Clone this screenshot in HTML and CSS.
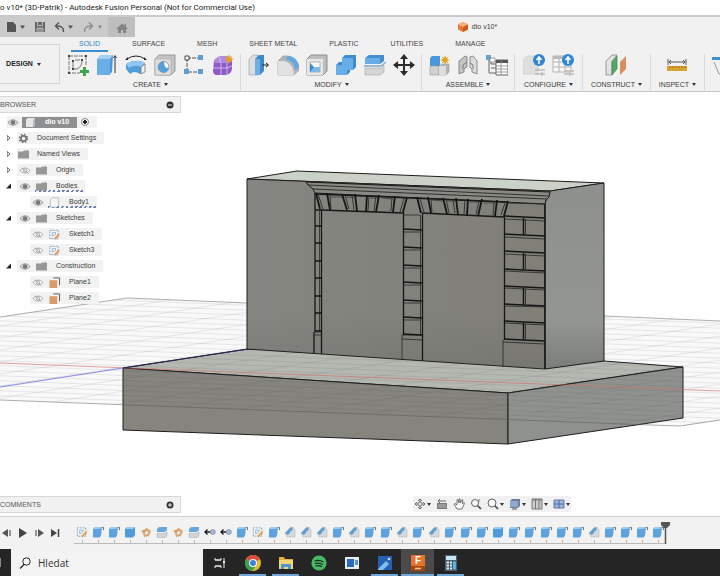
FILE: index.html
```html
<!DOCTYPE html>
<html lang="en">
<head>
    <meta charset="UTF-8">
    <meta name="viewport" content="width=device-width, initial-scale=1.0">
    <title>dio v10* (3D-Patrik) - Autodesk Fusion Personal</title>
    <link rel="stylesheet" href="styles.css">
</head>
<body>
    <!-- shared icons -->
    <svg class="sprite" aria-hidden="true">
        <symbol id="eye" viewBox="0 0 14 10">
            <path d="M1 5Q7-1.500 13 5Q7 11.500 1 5Z" fill="#ddd" stroke="#8a8a8a"/>
            <circle cx="7" cy="5" r="2.600" fill="#777"/>
        </symbol>
        <symbol id="eye-off" viewBox="0 0 14 10">
            <path d="M1 5Q7-1 13 5Q7 11 1 5ZM3 2l8 6.500" fill="#fff" stroke="#999" stroke-width=".9"/>
            <circle cx="7" cy="5" r="2" fill="none" stroke="#999"/>
        </symbol>
        <symbol id="folder" viewBox="0 0 13 10">
            <path d="M1 2h5l1-1h5v8H1Z" fill="#989898"/>
        </symbol>
        <symbol id="gear" viewBox="0 0 13 10">
            <circle cx="6.500" cy="5" r="2.700" fill="none" stroke="#777" stroke-width="1.800"/>
            <circle cx="6.500" cy="5" r="4" fill="none" stroke="#777" stroke-width="1.600" stroke-dasharray="1.570 1.570"/>
        </symbol>
        <symbol id="body" viewBox="0 0 13 12">
            <path d="M2 3l2-2h7v8l-2 2H2Z" fill="#f6f6f6" stroke="#aab0b8" stroke-width=".8"/>
        </symbol>
        <symbol id="sketch" viewBox="0 0 13 12">
            <path d="M1.500 1.500h9v9h-9Z" fill="#f5f8fb" stroke="#7f9fba" stroke-dasharray="2 1"/>
            <path d="M4 8V4h4Q8 7 4 8" fill="none" stroke="#7f9fba" stroke-width=".8"/>
            <path d="M6.500 11l5-5.500" stroke="#e2a04a" stroke-width="2"/>
        </symbol>
        <symbol id="plane" viewBox="0 0 13 12">
            <path d="M5 1h7v8" fill="none" stroke="#555"/>
            <path d="M1 3.500h8.500V12H1Z" fill="#d99a6c"/>
        </symbol>
        <symbol id="t-extrude" viewBox="0 0 12 12">
            <path d="M1 3l2-2h7l-1 9-1.500 1.500H1Z" fill="#5da2dc"/>
            <path d="M1 3l2-2h7L8 3Z" fill="#9ccbf0"/>
            <path d="M10 1.500h1.500V4" fill="none" stroke="#555" stroke-width=".8"/>
        </symbol>
        <symbol id="t-box" viewBox="0 0 12 12">
            <path d="M1 3l2-2h8v8l-2 2.500H1Z" fill="#4f9bdb"/>
            <path d="M1 3l2-2h8L9 3Z" fill="#9ccbf0"/>
        </symbol>
        <symbol id="t-plane" viewBox="0 0 12 12">
            <path d="M1 5l6-3 4 3-2 5-5 1-1-4Z" fill="#d7a877"/>
            <path d="M5 6l3-1v3l-3 .5Z" fill="#f6e7d7"/>
        </symbol>
        <symbol id="t-split" viewBox="0 0 12 12">
            <path d="M1 3l2-2h8v3L9 6H1Z" fill="#64a8df"/>
            <path d="M1 7.500h8L11 6v4l-2 1.500H1Z" fill="#d2d5d8" stroke="#a4a8ac" stroke-width=".5"/>
        </symbol>
        <symbol id="t-move" viewBox="0 0 12 12">
            <path d="M1 6h6M3.500 3.500L1 6l2.500 2.500" fill="none" stroke="#222" stroke-width="1.400"/>
            <circle cx="8.800" cy="6" r="2.500" fill="#a9b8d0" stroke="#7888a4" stroke-width=".7"/>
        </symbol>
        <symbol id="t-chamfer" viewBox="0 0 12 12">
            <path d="M1 7l6-6h2l2 3v7H3Z" fill="#d6d8da" stroke="#b0b2b4" stroke-width=".5"/>
            <path d="M1 7l6-6 2 2-5 6Z" fill="#5f9fd0"/>
        </symbol>
        <symbol id="star" viewBox="0 0 10 10">
            <path d="M5 0l1 3 2.500-1.500L7 4l3 1-3 1 1.500 2.500L6 7l-1 3-1-3-2.500 1.500L3 6 0 5l3-1-1.500-2.500L4 3Z" fill="#e5a022"/>
        </symbol>
        <symbol id="upload" viewBox="0 0 12 12">
            <circle cx="6" cy="6" r="6" fill="#2f86d2"/>
            <path d="M6 10V4M3.500 6L6 3l2.500 3" fill="none" stroke="#fff" stroke-width="1.500"/>
        </symbol>
    </svg>

    <div class="titlebar">o v10* (3D-Patrik) - Autodesk Fusion Personal (Not for Commercial Use)</div>

    <header class="quickbar">
        <div class="quick-tools">
            <button aria-label="File"><svg width="20" height="12" viewBox="0 0 20 12"><path d="M1 1h6l3 3v7H1Z" fill="#555"/><path d="M14 4.500h5L16.500 8Z" fill="#555"/></svg></button>
            <button aria-label="Save"><svg width="10" height="12" viewBox="0 0 10 12"><path d="M0 1h10v10H0Z" fill="#666"/><path d="M2.500 1v3.500h5V1M2 11V7h6v4M4 7v4M6 7v4" fill="none" stroke="#ccc" stroke-width=".9"/></svg></button>
            <button aria-label="Undo"><svg width="20" height="12" viewBox="0 0 20 12"><path d="M9.500 11Q10 4.500 2 5M5 1.500L1.500 5 5 8.500" fill="none" stroke="#555" stroke-width="1.400"/><path d="M14 4.500h5L16.500 8Z" fill="#555"/></svg></button>
            <button aria-label="Redo"><svg width="20" height="12" viewBox="0 0 20 12"><path d="M1.500 11Q1 4.500 9 5M6 1.500L9.500 5 6 8.500" fill="none" stroke="#8d8d8d" stroke-width="1.400"/><path d="M15 4.500h4L17 8Z" fill="#888"/></svg></button>
        </div>
        <button class="home-tab" aria-label="Home"><svg width="12" height="12" viewBox="0 0 12 12"><path d="M6 1.500L0 7h2v4h3V8h2v3h3V7h2l-2-2V2H8.500v1.500Z" fill="#858585"/></svg></button>
        <div class="doc-tab">
            <svg width="10" height="10" viewBox="0 0 10 10"><path d="M0 2.500L5 0l5 2.500v5L5 10 0 7.500Z" fill="#e4793a"/><path d="M0 2.500L5 0l5 2.500L5 5Z" fill="#f6b07c"/><path d="M5 5l5-2.500v5L5 10Z" fill="#cc5c22"/></svg>
            <span>dio v10*</span>
        </div>
    </header>

    <div class="ribbon">
        <button class="workspace">DESIGN <i class="caret"></i></button>
        <div class="ribbon-main">
            <nav class="tabs">
                <a href="#" class="active">SOLID</a>
                <a href="#">SURFACE</a>
                <a href="#">MESH</a>
                <a href="#">SHEET METAL</a>
                <a href="#">PLASTIC</a>
                <a href="#">UTILITIES</a>
                <a href="#">MANAGE</a>
            </nav>
            <div class="groups">
                <div class="group">
                    <div class="tools">
                        <button aria-label="Create Sketch"><svg viewBox="0 0 22 22"><path d="M2 2h17M2 2v17h11M19 2v10" fill="none" stroke="#777" stroke-dasharray="4 1"/><path d="M6 15V7M6 15h4Q15 13 15 6" fill="none" stroke="#777"/><path d="M8 6h5" stroke="#777"/><path d="M1 1h2v2H1ZM18 1h2v2h-2ZM1 18h2v2H1ZM5 6h2v2H5ZM14 5h2v2h-2ZM5 14h2v2H5Z" fill="#444"/><path d="M17.500 13v9M13 17.500h9" stroke="#3da54c" stroke-width="3"/></svg></button>
                        <button aria-label="Extrude"><svg viewBox="0 0 22 22"><path d="M1 5l4-4h12l-1 17-3 3H1Z" fill="#4c97d6"/><path d="M1 5l4-4h12l-3 4Z" fill="#a2cff3"/><path d="M1 5h13v16H1Z" fill="#69aee7"/><path d="M19 19V3M17.500 4L19 1.500 20.500 4" fill="none" stroke="#333"/></svg></button>
                        <button aria-label="Revolve"><svg viewBox="0 0 22 22"><path d="M1 10Q11 4 20 9l-1 9-4 2Q9 16 5 20l-4-5Z" fill="#4f9ddb"/><path d="M1 10Q11 4 20 9l-4 4Q9 10 4 14Z" fill="#91c6f0"/><path d="M16 13l4-3v8l-4 2Z" fill="#f0f0f0" stroke="#777" stroke-width=".8"/><path d="M2 5Q11-1 20 5" fill="none" stroke="#222"/><path d="M0 6l3-3v3ZM22 6l-3-3v3Z" fill="#222"/></svg></button>
                        <button aria-label="Hole"><svg viewBox="0 0 22 22"><path d="M1 5l4-4h16v16l-4 4H1Z" fill="#c4c4c4" stroke="#999"/><path d="M1 5h16v16H1Z" fill="#dedede" stroke="#aaa" stroke-width=".6"/><circle cx="9.500" cy="13" r="5.500" fill="#fafafa" stroke="#999"/><path d="M10 7.500a5.500 5.500 0 1 0 5 6.500Q10 15 10 7.500" fill="#579fd6"/></svg></button>
                        <button aria-label="Pattern"><svg viewBox="0 0 22 22"><path d="M4 4h14M4 4v14h14" fill="none" stroke="#555" stroke-dasharray="4 1"/><path d="M2 2h4v4H2Z" fill="#fff" stroke="#444"/><path d="M15 1h5v5h-5ZM1 15h5v5H1ZM15 15h5v5h-5Z" fill="#599fd5"/></svg></button>
                        <button aria-label="Create Form"><svg viewBox="0 0 22 22"><path d="M2 7q3-5 9-5 8 0 9 5v8q-1 6-8 6H4q-3-1-3-4Z" fill="#8e5bc5"/><path d="M2 7q3-5 9-5 8 0 9 5l-4 2H3Z" fill="#b48ae0"/><path d="M9 9v12M1 14h14l5-2M15 9v12M8 3q-1 3 1 6" fill="none" stroke="#dcc8f2" stroke-width=".8"/><use href="#star" x="12" y="0" width="10" height="10"/></svg></button>
                    </div>
                    <span class="group-name">CREATE <i class="caret"></i></span>
                </div>
                <div class="group">
                    <div class="tools">
                        <button aria-label="Press Pull"><svg viewBox="0 0 22 22"><path d="M1 5l4-4h5v20H1Z" fill="#ddd" stroke="#999" stroke-width=".6"/><path d="M7 5l4-4h5v16l-4 4H7Z" fill="#4088c8"/><path d="M7 5h5v16H7Z" fill="#6aafe8"/><path d="M14 11h6M18 9l2.500 2-2.500 2" fill="none" stroke="#222"/></svg></button>
                        <button aria-label="Fillet"><svg viewBox="0 0 22 22"><path d="M1 7l5-5h5q10 1 11 14l-5 5H1Z" fill="#b5b5b5" stroke="#999" stroke-width=".7"/><path d="M1 21V7h5q10 1 11 14Z" fill="#e1e1e1"/><path d="M8 5l3-3q10 1 11 11l-4 3Q17 7 8 5Z" fill="#64a8df"/></svg></button>
                        <button aria-label="Shell"><svg viewBox="0 0 22 22"><path d="M1 5l4-4h16v16l-4 4H1Z" fill="#bdbdbd" stroke="#8d8d8d"/><path d="M1 5h16v16H1Z" fill="#e8e8e8"/><path d="M4 8h10v10H4Z" fill="#fafafa" stroke="#999" stroke-width=".7"/><path d="M4 9l4 4v5H4Z" fill="#3f89ca"/><path d="M8 13h6v5H4Z" fill="#7db9e8"/></svg></button>
                        <button aria-label="Combine"><svg viewBox="0 0 22 22"><path d="M7 4l3-3h11v12l-3 3h-3v2l-3 3H1V11l3-3h3Z" fill="#3e8bd0"/><path d="M7 4h11v12h-6v5H1V11h6Z" fill="#68aee8"/></svg></button>
                        <button aria-label="Split Body"><svg viewBox="0 0 22 22"><path d="M1 4l4-3h15v6l-4 3H1Z" fill="#448fd0"/><path d="M1 4h15v6H1Z" fill="#66ace6"/><path d="M0 12h17l5-4" fill="none" stroke="#3d83bd"/><path d="M1 14h16l3-3v7l-4 3H1Z" fill="#d5d5d5" stroke="#aaa" stroke-width=".6"/></svg></button>
                        <button aria-label="Move"><svg viewBox="0 0 22 22"><path d="M11 3v16M3 11h16" stroke="#2b2b2b" stroke-width="2"/><path d="M11 0l4 5H7ZM11 22l4-5H7ZM0 11l5-4v8ZM22 11l-5-4v8Z" fill="#2b2b2b"/></svg></button>
                    </div>
                    <span class="group-name">MODIFY <i class="caret"></i></span>
                </div>
                <div class="group compact">
                    <div class="tools">
                        <button aria-label="New Component"><svg viewBox="0 0 22 22"><path d="M2 4l2-2h8v10H2Z" fill="#4896db"/><path d="M2 12h9v9H2Z" fill="#d2d2d2" stroke="#999" stroke-width=".6"/><path d="M11 12l3-2h7v8l-3 3h-7Z" fill="#b4b4b4" stroke="#999" stroke-width=".6"/><path d="M11 12h7v9h-7Z" fill="#ddd"/><use href="#star" x="12" y="1" width="10" height="10"/></svg></button>
                        <button aria-label="Joint"><svg viewBox="0 0 22 22"><path d="M2 7l6-5 2 1v10l-3 2v3l-5 2Z" fill="#c4c4c4" stroke="#777" stroke-width=".8"/><path d="M20 7l-4-5-3 1v10l2 2v3l5 2Z" fill="#ddd" stroke="#777" stroke-width=".8"/><path d="M10 8l-4 3v4M13 9l3 2v4" fill="none" stroke="#777"/></svg></button>
                        <button aria-label="Bill of Materials"><svg viewBox="0 0 22 22"><path d="M3 4v15h7M5 7v3h5M5 14h5" fill="none" stroke="#666"/><path d="M0 1h5v5H0Z" fill="#62a4da"/><path d="M4 4h5v4H4Z" fill="#fff" stroke="#777" stroke-width=".7"/><path d="M10 6h12v15H10Z" fill="#fff" stroke="#666"/><path d="M10 6h12v3H10Z" fill="#555"/><path d="M10 12h12M10 15h12M10 18h12M15 7v14" stroke="#888" stroke-width=".8"/></svg></button>
                    </div>
                    <span class="group-name">ASSEMBLE <i class="caret"></i></span>
                </div>
                <div class="group wide">
                    <div class="tools">
                        <button aria-label="Configure Design"><svg viewBox="0 0 22 22"><path d="M0 6l4-4h11v18H0Z" fill="#dfdfdf" stroke="#ccc" stroke-width=".7"/><path d="M12 16h10M12 20h10M15 14v3M19 18v4" stroke="#bbb" stroke-width="1.400"/><use href="#upload" x="10" y="0" width="12" height="12"/></svg></button>
                        <button aria-label="Configuration Table"><svg viewBox="0 0 22 22"><path d="M1 2h18v16H1ZM1 8h18M1 13h18M7 2v16M13 2v16" fill="#f7f7f7" stroke="#b2b2b2"/><path d="M1 2h18v3H1Z" fill="#bbb"/><path d="M12 17h10M12 20h10M18 18v4" stroke="#bbb" stroke-width="1.400"/><use href="#upload" x="10" y="0" width="12" height="12"/></svg></button>
                    </div>
                    <span class="group-name">CONFIGURE <i class="caret"></i></span>
                </div>
                <div class="group wide">
                    <div class="tools">
                        <button aria-label="Offset Plane"><svg viewBox="0 0 22 22"><path d="M1 7l6-6h5l-5 6v14H1Z" fill="#e2e2e2" stroke="#888" stroke-width=".8"/><path d="M7 8l5-6v13l-5 6Z" fill="#4faa63" stroke="#377b46" stroke-width=".6"/><path d="M15 8l6-6v13l-6 6Z" fill="#d98e5d"/></svg></button>
                    </div>
                    <span class="group-name">CONSTRUCT <i class="caret"></i></span>
                </div>
                <div class="group wide">
                    <div class="tools">
                        <button aria-label="Measure"><svg viewBox="0 0 22 22"><path d="M2 5v6M20 5v6M3 8h16M5 6L3 8l2 2M17 6l2 2-2 2" fill="none" stroke="#555"/><path d="M1 12h20v5H1Z" fill="#d9a12f"/><path d="M4 12v2M7 12v2M10 12v2M13 12v2M16 12v2M19 12v2" stroke="#8f6510" stroke-width=".8"/></svg></button>
                    </div>
                    <span class="group-name">INSPECT <i class="caret"></i></span>
                </div>
                <div class="group">
                    <div class="tools">
                        <button aria-label="Insert"><svg viewBox="0 0 22 22"><path d="M0 3h12v3H0Z" fill="#408fd3"/><path d="M2 8l5 12h5" fill="none" stroke="#999"/></svg></button>
                    </div>
                </div>
            </div>
        </div>
    </div>

    <main class="viewport">
        <svg class="scene" viewBox="0 92 720 424" preserveAspectRatio="xMidYMid slice">
            <defs>
                <clipPath id="ground"><path d="M-20 320L127 298 740 322V417L680 426-20 399Z"/></clipPath>
                <linearGradient id="front" x1="0" y1="0" x2="1" y2="0"><stop offset="0" stop-color="#858681"/><stop offset="1" stop-color="#807f78"/></linearGradient>
                <linearGradient id="side" x1="0" y1="0" x2="0" y2="1"><stop offset="0" stop-color="#8d908c"/><stop offset=".75" stop-color="#929591"/><stop offset="1" stop-color="#7b7d79"/></linearGradient>
                <linearGradient id="shade" x1="0" y1="0" x2="0" y2="1"><stop offset=".7" stop-color="#555" stop-opacity="0"/><stop offset="1" stop-color="#555" stop-opacity=".2"/></linearGradient>
            </defs>
            <path d="M-20 320L127 298 740 322V417L680 426-20 399Z" fill="#f9f9f9"/>

            <!-- plinth -->
            <g stroke="#1d1d1d" stroke-linejoin="round">
                <path d="M123 368L248 349 604 361 683 367 508 393Z" fill="#b4b8b1"/>
                <path d="M123 368L508 393V444L123 430Z" fill="#85847e"/>
                <path d="M508 393L683 367V418L508 444Z" fill="#8e918d"/>
            </g>

            <g clip-path="url(#ground)">
                <path id="gridAcross" class="grid-line"/>
                <path id="gridDepth" class="grid-line"/>
            </g>
            <path d="M0 317L127 298 247 303M604 316L720 321M0 400L650 425 680 426 720 420" fill="none" stroke="#555" stroke-opacity=".6" stroke-width=".8"/>
            <path d="M0 363L720 391" stroke="#d46a6a" stroke-opacity=".8" stroke-width=".8"/>
            <path d="M0 387L123 368" stroke="#7a7ae0" stroke-width=".9"/>
            <path d="M123 368L248 349" stroke="#26265a" stroke-width="1.200"/>

            <!-- wall block -->
            <g stroke="#1d1d1d" stroke-linejoin="round">
                <path d="M247 179L297 171 604 183 550 191Z" fill="#cbd0c8"/>
                <path d="M247 179L550 191 545 203V369L247 349Z" fill="url(#front)"/>
                <path d="M550 191L604 183V361L545 369V203Z" fill="url(#side)"/>
            </g>
            <path d="M247 179L545 191V369L247 349Z" fill="url(#shade)"/>
            <path d="M306 182L550 192 549 197 546 200 545 204 315 193 313 189 308 185Z" fill="#8a8a84" stroke="#1d1d1d"/>
            <path d="M308 185L549 196M313 189L547 199" stroke="#252525" stroke-width=".9"/>

            <!-- arches -->
            <path d="M316 194L507 202M321 210L403 213M422 213L504 217" stroke="#181818" stroke-width="1.400"/>
            <path d="M316 193l4 16M327 193l3 17M342 194l5 16M355 194l2 17M367 195l-1 17M379 195l-3 17M395 196l-2 16M407 197l-4 15M417 197l4 16M428 197l3 16M443 198l4 16M456 198l2 17M468 199l-1 16M482 199l-4 17M497 200l-2 16M508 201l-4 15" stroke="#151515" stroke-width="1.800"/>
            <path d="M318 194l5 15M330 195l1 14M345 195l4 14M352 195l2 15M369 196l-1 15M376 196l-2 15M392 197l-1 14M404 198l-4 14M420 199l4 13M431 199l1 13M446 199l3 14M453 200l2 13M465 200l-1 14M479 201l-3 13M494 202l-1 13M505 203l-4 12" stroke="#222" stroke-width=".8"/>
            <path d="M331 197l11 0M346 197l9 1M370 198l8 0M382 198l11 1M432 200l11 1M447 201l8 0M470 202l10 0M484 203l11 0" stroke="#333" stroke-width=".7"/>

            <!-- left pilaster -->
            <path d="M315 193V332M321.500 210V354M314 332V353" stroke="#161616" stroke-width="1.300"/>
            <path d="M319.500 211V331M314 332h8M314 335h8" stroke="#262626" stroke-width=".8"/>
            <path d="M315 210h6M315 226h7M315 243h7M315 261h7M315 278h7M315 296h7M315 313h7M315 331h7" stroke="#151515" stroke-width="1.700"/>

            <!-- middle pilaster -->
            <path d="M403.500 212V335M422.500 213V361" stroke="#161616" stroke-width="1.300"/>
            <path d="M420.500 215V334M402 335V360M402 335h20M402 339l20 1M404 215h16M404 232h16M404 250h16M404 268h16M404 285h16M404 303h16M404 320h16" stroke="#262626" stroke-width=".8"/>
            <path d="M403 229l19 1M403 247l19 1M403 265l19 1M403 282l19 1M403 300l19 1M403 317l19 1M403 334l19 1" stroke="#151515" stroke-width="1.700"/>

            <!-- right pilaster -->
            <path d="M504.500 217V340M545 204V369" stroke="#161616" stroke-width="1.300"/>
            <path d="M503 340V367M503 342l42 2M505 219l40 2M505 237l40 2M505 254l40 2M505 271l40 2M505 288l40 2M505 306l40 1M505 323l40 2M507 203l38 1" stroke="#262626" stroke-width=".8"/>
            <path d="M504 216l41 2M504 234l41 2M504 251l41 2M504 269l41 2M504 286l41 2M504 304l41 2M504 321l41 2M504 339l41 2M523.500 218v17M523.500 253v17M523.500 288v17M523.500 323v17" stroke="#151515" stroke-width="1.500"/>
            <path d="M525.500 219v16M525.500 254v16M525.500 289v16M525.500 324v16" stroke="#262626" stroke-width=".8"/>
        </svg>

        <aside class="browser">
            <div class="panel-head">
                <span>BROWSER</span>
                <button aria-label="Collapse"><svg width="8" height="8" viewBox="0 0 8 8"><circle cx="4" cy="4" r="3.500" fill="#333"/><path d="M2 4h4" stroke="#eee"/></svg></button>
            </div>
            <ul class="tree">
                <li class="root">
                    <div class="chip">
                        <svg class="eye"><use href="#eye"/></svg>
                        <span class="root-name"><svg width="9" height="9" viewBox="0 0 9 9"><path d="M0 1.500L2 0h7v7L7 9H0Z" fill="#e5e7ea"/><path d="M7 2l2-2v7L7 9Z" fill="#b8bcc2"/></svg>dio v10</span>
                        <input type="radio" name="component" aria-label="Activate component" checked>
                    </div>
                </li>
                <li><button class="arrow" aria-label="Expand"></button><div class="chip plain"><svg class="icon"><use href="#gear"/></svg>Document Settings</div></li>
                <li><button class="arrow" aria-label="Expand"></button><div class="chip plain"><svg class="icon"><use href="#folder"/></svg>Named Views</div></li>
                <li><button class="arrow" aria-label="Expand"></button><div class="chip"><svg class="eye"><use href="#eye-off"/></svg><svg class="icon"><use href="#folder"/></svg>Origin</div></li>
                <li><button class="arrow open" aria-label="Collapse"></button><div class="chip marked"><svg class="eye"><use href="#eye"/></svg><svg class="icon"><use href="#folder"/></svg>Bodies</div></li>
                <li class="child"><div class="chip marked"><svg class="eye"><use href="#eye"/></svg><svg class="icon"><use href="#body"/></svg>Body1</div></li>
                <li><button class="arrow open" aria-label="Collapse"></button><div class="chip"><svg class="eye"><use href="#eye"/></svg><svg class="icon"><use href="#folder"/></svg>Sketches</div></li>
                <li class="child"><div class="chip"><svg class="eye"><use href="#eye-off"/></svg><svg class="icon"><use href="#sketch"/></svg>Sketch1</div></li>
                <li class="child"><div class="chip"><svg class="eye"><use href="#eye-off"/></svg><svg class="icon"><use href="#sketch"/></svg>Sketch3</div></li>
                <li><button class="arrow open" aria-label="Collapse"></button><div class="chip"><svg class="eye"><use href="#eye"/></svg><svg class="icon"><use href="#folder"/></svg>Construction</div></li>
                <li class="child"><div class="chip"><svg class="eye"><use href="#eye-off"/></svg><svg class="icon"><use href="#plane"/></svg>Plane1</div></li>
                <li class="child"><div class="chip"><svg class="eye"><use href="#eye-off"/></svg><svg class="icon"><use href="#plane"/></svg>Plane2</div></li>
            </ul>
        </aside>

        <div class="panel-head comments">
            <span>COMMENTS</span>
            <button aria-label="Expand"><svg width="8" height="8" viewBox="0 0 8 8"><circle cx="4" cy="4" r="3.500" fill="#333"/><path d="M2 4h4M4 2v4" stroke="#eee"/></svg></button>
        </div>

        <div class="navbar">
            <button aria-label="Orbit"><svg viewBox="0 0 12 12"><path d="M6 1v10M1 6h10M4 3l2-2 2 2M4 9l2 2 2-2M3 4L1 6l2 2M9 4l2 2-2 2" fill="none" stroke="#555" stroke-width=".8"/><circle cx="6" cy="6" r="2" fill="#eee" stroke="#555" stroke-width=".8"/></svg><i class="caret"></i></button>
            <button aria-label="Look At"><svg viewBox="0 0 12 12"><path d="M1 5h10v6H1Z" fill="#777"/><path d="M2 7h8M2 9h8" stroke="#ddd" stroke-width=".7"/><path d="M2 3h6M4 1L2 3l2 2M9 2v2" fill="none" stroke="#666"/></svg></button>
            <button aria-label="Pan"><svg viewBox="0 0 12 12"><path d="M4 11L1 6l1-.5L4 7V2l1-.5L6 5V1l1-.2L7.500 5 9 1.500l.8.5L9.500 6 11 4.500l.5.8L9 11Z" fill="#fafafa" stroke="#555" stroke-width=".8"/></svg></button>
            <button aria-label="Zoom"><svg viewBox="0 0 12 12"><circle cx="5" cy="5" r="3.500" fill="#f9f9f9" stroke="#666"/><path d="M7.500 7.500L11 11" stroke="#444" stroke-width="1.600"/><path d="M9 1v3" stroke="#777"/></svg></button>
            <button aria-label="Fit"><svg viewBox="0 0 12 12"><circle cx="5" cy="5" r="4" fill="#f9f9f9" stroke="#666"/><path d="M8 8l3 3" stroke="#444" stroke-width="1.600"/></svg><i class="caret"></i></button>
            <button aria-label="Display Settings"><svg viewBox="0 0 12 12"><path d="M1 3l2-2h8v7L9 10H1Z" fill="#6c7c9b"/><path d="M1 3h8v6H1Z" fill="#91a8cf"/><path d="M3 11h5" stroke="#555"/></svg><i class="caret"></i></button>
            <button aria-label="Grid and Snaps"><svg viewBox="0 0 12 12"><path d="M1 1h10v10H1Z" fill="#ccc" stroke="#777"/><path d="M1 2h10M4.500 1v10M8 1v10" stroke="#777"/></svg><i class="caret"></i></button>
            <button aria-label="Viewports"><svg viewBox="0 0 12 12"><path d="M1 2h10v8H1Z" fill="#9db4dc" stroke="#6577a0"/><path d="M6 2v8M1 6h10" stroke="#506aa0"/></svg><i class="caret"></i></button>
        </div>
    </main>

    <div class="timeline">
        <div class="playback">
            <button aria-label="Step back"><svg viewBox="0 0 12 12"><path d="M7 2v8L1 6Z" fill="#555"/><path d="M9 3v6" stroke="#777" stroke-width="1.500"/></svg></button>
            <button aria-label="Play"><svg viewBox="0 0 12 12"><path d="M2 1l8 5-8 5Z" fill="#444"/></svg></button>
            <button aria-label="Step forward"><svg viewBox="0 0 12 12"><path d="M5 2v8l6-4Z" fill="#555"/><path d="M3 3v6" stroke="#777" stroke-width="1.500"/></svg></button>
            <button aria-label="Go to end"><svg viewBox="0 0 12 12"><path d="M2 2v8l6-4Z" fill="#444"/><path d="M9.500 2v8" stroke="#444" stroke-width="1.500"/></svg></button>
        </div>
        <ol class="features" id="features"></ol>
        <svg class="marker" viewBox="0 0 9 22"><path d="M0 0h9v3L6 6H3L0 3Z" fill="#555"/><path d="M4.500 5v17" stroke="#555" stroke-width="1.500"/></svg>
    </div>

    <footer class="taskbar">
        <button class="start" aria-label="Start"></button>
        <label class="search">
            <svg width="12" height="12" viewBox="0 0 12 12"><circle cx="7.500" cy="4.500" r="3.700" fill="none" stroke="#222"/><path d="M5 7.500L1 11.500" stroke="#222" stroke-width="1.200"/></svg>
            <input type="text" placeholder="Hledat" aria-label="Hledat">
        </label>
        <button aria-label="Task View"><svg viewBox="0 0 16 16"><path d="M3 3v2h6V3M3 13v-2h6v2M3 11h6M3 5h6M12 3v10" fill="none" stroke="#eee"/><path d="M11 6h2v2h-2Z" fill="#eee"/></svg></button>
        <button class="running" aria-label="Chrome"><svg viewBox="0 0 16 16"><circle cx="8" cy="8" r="8" fill="#e4b92e"/><path d="M8 8L1 4A8 8 0 0 1 15 4.200Z" fill="#dc4a3c"/><path d="M8 8L1 4A8 8 0 0 0 7.500 16L11 10Z" fill="#36a153"/><circle cx="8" cy="8" r="4" fill="#fff"/><circle cx="8" cy="8" r="3" fill="#3f7de0"/></svg></button>
        <button class="running" aria-label="Explorer"><svg viewBox="0 0 16 16"><path d="M1 2h5l1 2h8v10H1Z" fill="#e2ad3d"/><path d="M1 5h14v9H1Z" fill="#f6d778"/><path d="M3 14V9h10v5h-3v-2H6v2Z" fill="#4b97ce"/></svg></button>
        <button aria-label="Spotify"><svg viewBox="0 0 16 16"><circle cx="8" cy="8" r="7.600" fill="#48b866"/><path d="M3.500 6Q8 4.500 12.500 7M4 8.500Q8 7.300 11.800 9.500M4.500 11Q8 9.800 11 11.700" fill="none" stroke="#1b2a1f" stroke-width="1.300"/></svg></button>
        <button aria-label="News"><svg viewBox="0 0 16 16"><path d="M1 2h14v12H1Z" fill="#e8edf3"/><path d="M3 4h7v8H3Z" fill="#2a69c0"/><path d="M11 5h3v5h-3Z" fill="#5f91cf"/></svg></button>
        <button class="running" aria-label="Photos"><svg viewBox="0 0 16 16"><path d="M1 1h14v14H1Z" fill="#2660b3"/><path d="M1 14L9 6l3 3-6 6H1Z" fill="#7bc0f2"/><circle cx="12" cy="4" r="1.300" fill="#cde6fb"/></svg></button>
        <button class="running current" aria-label="Fusion"><svg viewBox="0 0 16 16"><path d="M1 0h14v16H1Z" fill="#e6722b"/><path d="M1 11h14v5H1Z" fill="#a8450f"/><text x="8" y="9" class="logo-letter">F</text><path d="M5 13.500h6" stroke="#f5c9a8" stroke-width="1.500"/></svg></button>
        <button class="running" aria-label="Calculator"><svg viewBox="0 0 16 16"><path d="M2 0h12v16H2Z" fill="#48606f"/><path d="M3 1h10v4H3Z" fill="#c5e6f2"/><path d="M3.500 6.500h2.500v2H3.500ZM7 6.500h2v2H7ZM3.500 9.500h2.500v2H3.500ZM7 9.500h2v2H7ZM3.500 12.500h2.500v2H3.500ZM7 12.500h2v2H7Z" fill="#dfe8ec"/><path d="M10 6.500h3v8h-3Z" fill="#54b4df"/></svg></button>
    </footer>

    <script>
        // e = extrude, b = box, s = sketch, p = plane, d = split, m = move, c = chamfer
        const icons = {
            e: "t-extrude",
            b: "t-box",
            s: "sketch",
            p: "t-plane",
            d: "t-split",
            m: "t-move",
            c: "t-chamfer"
        };
        const features = "seebpdpdmmeseccceceececeeebeeeeeceeee";
        const list = document.getElementById("features");

        features.split("").forEach(key => {
            const li = document.createElement("li");
            li.innerHTML = '<svg><use href="#' + icons[key] + '"/></svg>';
            list.appendChild(li);
        });

        // ground grid, one set of lines per direction
        let across = "";
        for (let y = 285; y < 400; y += 5) {
            across += "M-20 " + y + "l760 29";
        }
        document.getElementById("gridAcross").setAttribute("d", across);

        let depth = "";
        for (let y = 317; y < 540; y += 12) {
            depth += "M-20 " + y + "l760 -116";
        }
        document.getElementById("gridDepth").setAttribute("d", depth);
    </script>
</body>
</html>
```

FILE: styles.css
```css
* {
    box-sizing: border-box;
}

body {
    margin: 0;
    height: 100vh;
    display: flex;
    flex-direction: column;
    overflow: hidden;
    font-family: "Liberation Sans", Arial, sans-serif;
    font-size: 7px;
    line-height: 10px;
    color: #3a3a3a;
    background-color: white;
}

button {
    display: flex;
    align-items: center;
    justify-content: center;
    padding: 0;
    border: none;
    background: none;
    font: inherit;
    color: inherit;
    cursor: pointer;
}

svg {
    display: block;
    flex: none;
}

.sprite {
    position: absolute;
    width: 0;
    height: 0;
}

.caret {
    display: inline-block;
    margin-left: 1px;
    border: 2px solid transparent;
    border-top: 3px solid #333;
    border-bottom: none;
    vertical-align: 1px;
}

.titlebar {
    height: 15px;
    line-height: 15px;
    font-family: Roboto, sans-serif;
    font-size: 8px;
    color: #222;
    white-space: nowrap;
}

/* quick access bar */
.quickbar {
    display: flex;
    height: 22px;
    border-top: 2px solid #c9c9c9;
    background-color: #f1f1f1;
}

.quick-tools {
    display: flex;
    align-items: center;
    gap: 9px;
    padding: 0 5px 0 6px;
    background-color: #cbcbcb;
}

.home-tab {
    width: 27px;
    padding-top: 2px;
    background-color: #bebebe;
}

.doc-tab {
    flex: 1;
    display: flex;
    align-items: center;
    justify-content: center;
    gap: 4px;
    padding-left: 100px;
}

/* ribbon */
.ribbon {
    display: flex;
    height: 55px;
    border-bottom: 1px solid #c4c4c4;
    background-color: #f1f1f1;
    overflow: hidden;
}

.workspace {
    flex: none;
    width: 60px;
    height: 40px;
    margin-top: 7px;
    padding-right: 12px;
    border: 1px solid #d6d6d6;
    border-left: none;
    font-weight: bold;
    color: #222;
}

.workspace .caret {
    margin-left: 4px;
}

.ribbon-main {
    flex: 1;
    min-width: 0;
}

.tabs {
    display: flex;
    gap: 16px;
    padding-left: 11px;
}

.tabs a {
    height: 15px;
    padding: 2px 8px 0;
    color: #444;
    text-decoration: none;
    white-space: nowrap;
}

.tabs .active {
    color: #2f86cc;
    border-bottom: 2px solid #3b8ed0;
}

.groups {
    display: flex;
}

.group {
    flex: none;
    display: flex;
    flex-direction: column;
    align-items: center;
    gap: 4px;
    height: 36px;
    margin-top: 2px;
    padding: 0 6px 0 7px;
    border-right: 1px solid #d8d8d8;
}

.group.compact {
    padding: 0 6px;
}

.group.wide {
    padding: 0 8px;
}

.tools {
    display: flex;
    gap: 7px;
}

.tools svg {
    width: 22px;
    height: 22px;
}

.group-name {
    white-space: nowrap;
}

/* model view */
.viewport {
    flex: 1;
    position: relative;
    min-height: 0;
}

.scene {
    width: 100%;
    height: 100%;
}

.grid-line {
    fill: none;
    stroke: #555;
    stroke-opacity: .14;
    stroke-width: .8;
}

.browser {
    position: absolute;
    top: 4px;
    left: 0;
    width: 181px;
}

.panel-head {
    display: flex;
    align-items: center;
    justify-content: space-between;
    height: 17px;
    padding-right: 6px;
    border: 1px solid #d8d8d8;
    border-left: none;
    background-color: #f1f1f1;
    color: #555;
}

.comments {
    position: absolute;
    left: 0;
    bottom: 3px;
    width: 181px;
}

.tree {
    margin: 1px 0 0;
    padding: 0;
    list-style: none;
}

.tree li {
    display: flex;
    align-items: center;
    height: 16px;
}

.tree .child {
    padding-left: 30px;
}

.tree .root {
    padding-left: 7px;
}

.chip {
    display: flex;
    align-items: center;
    height: 12px;
    padding-right: 8px;
    background-color: #f2f2f2;
    white-space: nowrap;
}

.chip .eye {
    width: 12px;
    height: 9px;
    margin: 0 4px 0 2px;
}

.chip .icon {
    width: 13px;
    height: 11px;
    margin-right: 8px;
}

.chip.plain .icon {
    margin-right: 7px;
}

.chip.marked {
    background-image: repeating-linear-gradient(120deg, #6d7fae 0 2px, transparent 2px 4px);
    background-size: calc(100% - 18px) 2px;
    background-position: right bottom;
    background-repeat: no-repeat;
}

.root-name {
    display: flex;
    align-items: center;
    gap: 10px;
    height: 11px;
    padding: 0 8px 0 4px;
    background-color: #8f8f8f;
    font-weight: bold;
    color: white;
}

.chip input {
    appearance: none;
    width: 8px;
    height: 8px;
    margin: 0 0 0 4px;
    border: 1px solid #888;
    border-radius: 50%;
    background: radial-gradient(#222 0 2px, white 2px);
}

.root .chip .eye {
    margin: 0 3px 0 0;
}

.arrow {
    width: 17px;
    height: 16px;
}

.arrow::before {
    content: "";
    width: 4px;
    height: 7px;
    background-color: #444;
    clip-path: polygon(0 0, 100% 50%, 0 100%, 0 0, 25% 25%, 25% 75%, 75% 50%, 25% 25%);
}

.arrow.open::before {
    width: 5px;
    height: 5px;
    background-color: #222;
    clip-path: polygon(100% 0, 100% 100%, 0 100%);
}

.navbar {
    position: absolute;
    left: 57.4%;
    bottom: 4px;
    display: flex;
    align-items: center;
    gap: 5px;
    height: 16px;
    padding: 0 1px;
    background-color: #f1f1f1;
}

.navbar svg {
    width: 12px;
    height: 12px;
}

/* timeline */
.timeline {
    display: flex;
    height: 33px;
    border-top: 1px solid #cfcfcf;
    background-color: #f2f2f2;
    overflow: hidden;
}

.playback {
    display: flex;
    align-items: center;
    gap: 4px;
    padding-left: 1px;
}

.playback svg {
    width: 12px;
    height: 12px;
}

.features {
    display: flex;
    margin: 9px 0 0 13px;
    padding: 0;
    list-style: none;
}

.features li {
    display: flex;
    justify-content: center;
    width: 16px;
    height: 18px;
    border-bottom: 1px solid #bbb;
    background: linear-gradient(#bbb, #bbb) center bottom / 1px 3px no-repeat;
}

.features svg {
    width: 12px;
    height: 12px;
}

.marker {
    width: 9px;
    height: 22px;
    margin-top: 5px;
    margin-left: -5px;
}

/* taskbar */
.taskbar {
    display: flex;
    height: 27px;
    background-color: #252525;
}

.taskbar button {
    width: 33px;
}

.taskbar .start {
    width: 11px;
    justify-content: flex-start;
}

.start::before {
    content: "";
    width: 1px;
    height: 9px;
    background-color: #888;
}

.taskbar svg {
    width: 16px;
    height: 16px;
}

.taskbar .running {
    background: linear-gradient(#6fa8d8, #6fa8d8) center bottom / 27px 2px no-repeat;
}

.taskbar .current {
    background-color: #4a4a4a;
    background-size: 100% 2px;
}

.search {
    display: flex;
    align-items: center;
    gap: 7px;
    width: 192px;
    padding-left: 8px;
    background-color: #f3f3f3;
}

.taskbar .search svg {
    width: 12px;
    height: 12px;
}

.search input {
    flex: 1;
    min-width: 0;
    padding: 0;
    border: none;
    outline: none;
    background: none;
    font-family: "Open Sans", sans-serif;
    font-size: 10px;
}

.search input::placeholder {
    color: #333;
    opacity: 1;
}

.logo-letter {
    font-size: 10px;
    font-weight: bold;
    fill: white;
    text-anchor: middle;
}
```
